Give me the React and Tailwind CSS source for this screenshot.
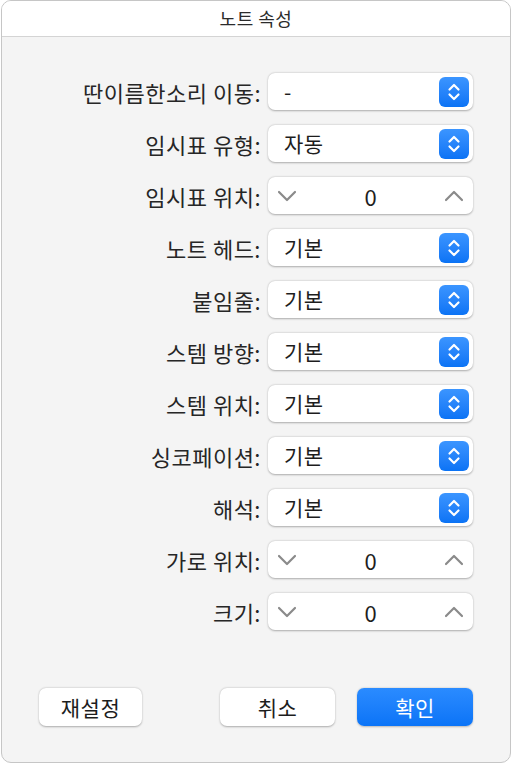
import React from 'react'

const font = { fontFamily: '"Noto Sans CJK KR", "Noto Sans", sans-serif' }

const rows = [
  { label: '딴이름한소리 이동:', type: 'select', value: '-' },
  { label: '임시표 유형:', type: 'select', value: '자동' },
  { label: '임시표 위치:', type: 'stepper', value: '0' },
  { label: '노트 헤드:', type: 'select', value: '기본' },
  { label: '붙임줄:', type: 'select', value: '기본' },
  { label: '스템 방향:', type: 'select', value: '기본' },
  { label: '스템 위치:', type: 'select', value: '기본' },
  { label: '싱코페이션:', type: 'select', value: '기본' },
  { label: '해석:', type: 'select', value: '기본' },
  { label: '가로 위치:', type: 'stepper', value: '0' },
  { label: '크기:', type: 'stepper', value: '0' },
]

const Chevron = ({ up }) => (
  <svg width="20" height="12" viewBox="0 0 20 12" fill="none">
    <path
      d={up ? 'M2 10 L10 2 L18 10' : 'M2 2 L10 10 L18 2'}
      stroke="#8a8a8a"
      strokeWidth="2.2"
      strokeLinecap="round"
      strokeLinejoin="round"
    />
  </svg>
)

const SelectBox = ({ value }) => (
  <div className="w-[205px] h-[37px] bg-white rounded-[7px] shadow-[0_0.5px_2px_rgba(0,0,0,0.3)] flex items-center pl-[16px] pr-[4px]">
    <span className="flex-1 text-[21px] text-[#1d1d1d] leading-none tracking-[0.5px]">{value}</span>
    <div className="w-[30px] h-[30px] rounded-[6px] bg-gradient-to-b from-[#3b95ff] to-[#0a73f5] flex items-center justify-center">
      <svg width="14" height="20" viewBox="0 0 14 20" fill="none">
        <path d="M2.5 7.5 L7 3 L11.5 7.5" stroke="white" strokeWidth="2.2" strokeLinecap="round" strokeLinejoin="round" />
        <path d="M2.5 12.5 L7 17 L11.5 12.5" stroke="white" strokeWidth="2.2" strokeLinecap="round" strokeLinejoin="round" />
      </svg>
    </div>
  </div>
)

const Stepper = ({ value }) => (
  <div className="w-[205px] h-[37px] bg-white rounded-[7px] shadow-[0_0.5px_2px_rgba(0,0,0,0.3)] flex items-center justify-between px-[9px]">
    <Chevron />
    <span className="text-[22px] text-[#1d1d1d] leading-none">{value}</span>
    <Chevron up />
  </div>
)

const Button = ({ children, primary, className }) => (
  <button
    className={`h-[38px] rounded-[7px] text-[21px] leading-none tracking-[0.5px] ${className} ${
      primary
        ? 'bg-gradient-to-b from-[#2a8bff] to-[#0a74f7] text-white shadow-[0_0.5px_2px_rgba(0,0,0,0.25)]'
        : 'bg-white text-[#1d1d1d] shadow-[0_0.5px_2px_rgba(0,0,0,0.3)]'
    }`}
  >
    {children}
  </button>
)

const App = () => {
  return (
    <div className="w-[513px] h-[769px] bg-white" style={font}>
      <div className="ml-[1px] w-[510px] h-[763px] rounded-[10px] border border-[#c6c6c6] overflow-hidden bg-[#f4f4f4] flex flex-col">
        <div className="h-[36px] bg-white border-b border-[#d4d4d4] flex items-center justify-center">
          <span className="text-[18px] text-[#2b2b2b] tracking-[0.5px]">노트 속성</span>
        </div>
        <div className="flex flex-col gap-[15px] pt-[36px]">
          {rows.map((r) => (
            <div key={r.label} className="flex items-center h-[37px]">
              <div className="w-[259px] text-right text-[22px] text-[#262626] leading-none tracking-[0.5px]">{r.label}</div>
              <div className="ml-[7px]">
                {r.type === 'select' ? <SelectBox value={r.value} /> : <Stepper value={r.value} />}
              </div>
            </div>
          ))}
        </div>
        <div className="mt-auto mb-[36px] flex items-center px-[37px]">
          <Button className="w-[103px]">재설정</Button>
          <div className="flex-1" />
          <Button className="w-[115px]">취소</Button>
          <Button primary className="w-[116px] ml-[22px]">확인</Button>
        </div>
      </div>
    </div>
  )
}

export default App
